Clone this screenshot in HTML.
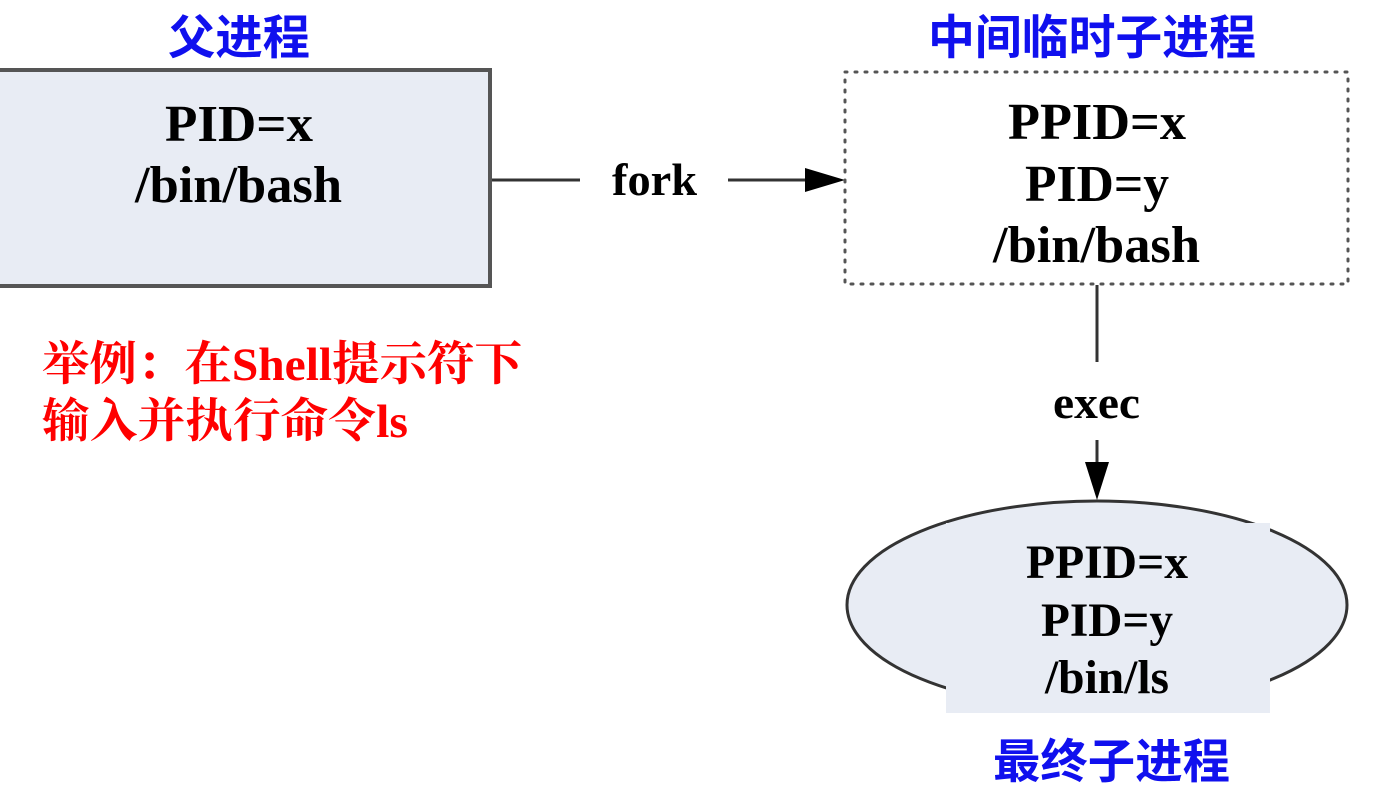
<!DOCTYPE html>
<html><head><meta charset="utf-8"><style>
html,body{margin:0;padding:0;background:#fff;width:1374px;height:794px;overflow:hidden}
svg{display:block}
.t{font-family:"Liberation Serif",serif;font-weight:bold;font-size:52px;fill:#000}
.b{font-family:"Liberation Sans","Noto Sans CJK SC",sans-serif;font-weight:bold;font-size:47px;fill:#1010ee}
.r{font-family:"Liberation Serif","Noto Serif CJK SC",serif;font-weight:bold;font-size:47px;fill:#ff0000}
</style></head><body>
<svg width="1374" height="794" viewBox="0 0 1374 794" xmlns="http://www.w3.org/2000/svg">
<text class="b" x="168" y="54" textLength="142" lengthAdjust="spacingAndGlyphs">父进程</text>
<text class="b" x="928" y="54" textLength="328" lengthAdjust="spacingAndGlyphs">中间临时子进程</text>
<text class="b" x="993" y="778" textLength="237" lengthAdjust="spacingAndGlyphs">最终子进程</text>

<rect x="-4" y="70" width="494" height="216" fill="#e8ecf4" stroke="#555" stroke-width="4"/>
<text class="t" x="165" y="141" textLength="148" lengthAdjust="spacingAndGlyphs">PID=x</text>
<text class="t" x="135" y="202" textLength="207" lengthAdjust="spacingAndGlyphs">/bin/bash</text>

<line x1="492" y1="180" x2="580" y2="180" stroke="#333" stroke-width="3"/>
<text class="t" x="612" y="195" textLength="85" lengthAdjust="spacingAndGlyphs" style="font-size:46px">fork</text>
<line x1="728" y1="180" x2="815" y2="180" stroke="#333" stroke-width="3"/>
<polygon points="805,168 845,180 805,192" fill="#000"/>

<rect x="845" y="72" width="503" height="212" fill="#fff" stroke="#555" stroke-width="3" stroke-dasharray="2,8" stroke-linecap="round"/>
<text class="t" x="1008" y="139" textLength="178" lengthAdjust="spacingAndGlyphs">PPID=x</text>
<text class="t" x="1025" y="201" textLength="144" lengthAdjust="spacingAndGlyphs">PID=y</text>
<text class="t" x="993" y="262" textLength="207" lengthAdjust="spacingAndGlyphs">/bin/bash</text>

<line x1="1097" y1="285" x2="1097" y2="362" stroke="#333" stroke-width="3"/>
<text class="t" x="1053" y="418" textLength="87" lengthAdjust="spacingAndGlyphs" style="font-size:46px">exec</text>
<line x1="1097" y1="440" x2="1097" y2="470" stroke="#333" stroke-width="3"/>
<polygon points="1085,462 1097,500 1109,462" fill="#000"/>

<ellipse cx="1097" cy="605" rx="250" ry="104" fill="#e8ecf4" stroke="#333" stroke-width="3"/>
<rect x="946" y="523" width="324" height="190" fill="#e8ecf4"/>
<text class="t" x="1026" y="578" textLength="162" lengthAdjust="spacingAndGlyphs" style="font-size:48px">PPID=x</text>
<text class="t" x="1041" y="636" textLength="132" lengthAdjust="spacingAndGlyphs" style="font-size:48px">PID=y</text>
<text class="t" x="1045" y="693" textLength="124" lengthAdjust="spacingAndGlyphs" style="font-size:48px">/bin/ls</text>

<text class="r" x="42" y="380" textLength="480" lengthAdjust="spacingAndGlyphs">举例：在Shell提示符下</text>
<text class="r" x="42" y="437" textLength="366" lengthAdjust="spacingAndGlyphs">输入并执行命令ls</text>
</svg>
</body></html>
